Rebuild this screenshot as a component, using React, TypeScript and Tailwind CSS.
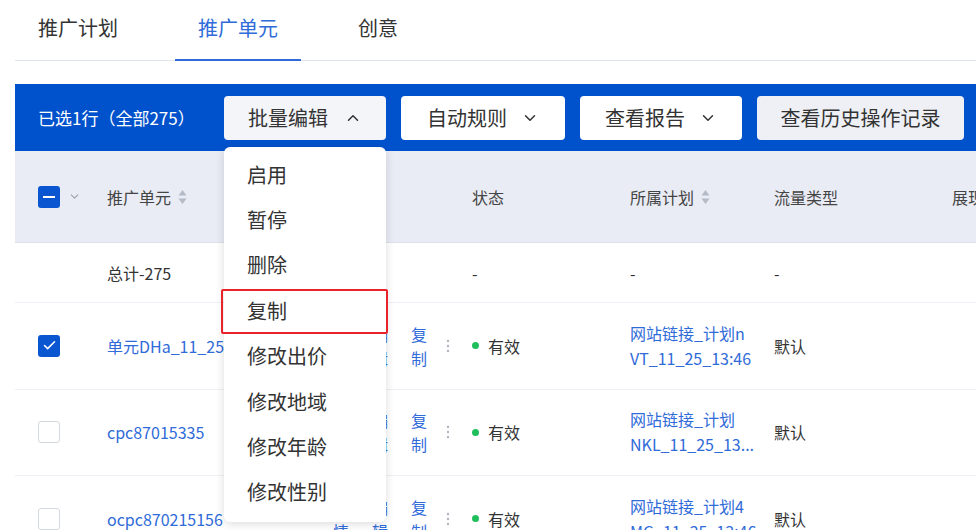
import { Check, ChevronDown, ChevronUp } from "lucide-react";

const FONT = { fontFamily: '"Noto Sans CJK SC", "Noto Sans", sans-serif' };

const menuItems = ["启用", "暂停", "删除", "复制", "修改出价", "修改地域", "修改年龄", "修改性别"];

const rows = [
  { name: "单元DHa_11_25_13:46", checked: true, plan: ["网站链接_计划n", "VT_11_25_13:46"] },
  { name: "cpc87015335", checked: false, plan: ["网站链接_计划", "NKL_11_25_13..."] },
  { name: "ocpc870215156", checked: false, plan: ["网站链接_计划4", "MG_11_25_13:46"] },
];

function SortIcon() {
  return (
    <svg width="9" height="16" viewBox="0 0 9 16" className="ml-[7px]">
      <path d="M4.5 1 L8.5 6.5 L0.5 6.5 Z" fill="#b4bac6" />
      <path d="M4.5 15 L8.5 9.5 L0.5 9.5 Z" fill="#b4bac6" />
    </svg>
  );
}

function Box({ checked }: { checked: boolean }) {
  if (checked) {
    return (
      <div className="w-[22px] h-[22px] rounded-[3px] bg-[#0a55d0] flex items-center justify-center">
        <Check className="w-[15px] h-[15px] text-white" strokeWidth={2.5} />
      </div>
    );
  }
  return <div className="w-[22px] h-[22px] rounded-[3px] bg-white border border-[#d4d8e0]" />;
}

function VLink({ text }: { text: string }) {
  return (
    <div className="flex flex-col w-[17px] text-[16px] leading-[24px] text-[#2f6bd9]">
      <span>{text[0]}</span>
      <span>{text[1]}</span>
    </div>
  );
}

function Dots() {
  return (
    <svg width="4" height="14" viewBox="0 0 4 14" className="ml-[18px]">
      <circle cx="2" cy="2" r="1.2" fill="#b0b5bf" />
      <circle cx="2" cy="7" r="1.2" fill="#b0b5bf" />
      <circle cx="2" cy="12" r="1.2" fill="#b0b5bf" />
    </svg>
  );
}

export default function App() {
  return (
    <div className="relative w-[976px] h-[530px] overflow-hidden bg-white text-[#333]" style={FONT}>
      {/* ── Tabs ── */}
      <div className="ml-[15px] flex h-[61px] gap-[34px] border-b border-[#dfe3ea]">
        <div className="px-[23px] pt-[12px] text-[20px] leading-[32px]">推广计划</div>
        <div className="px-[23px] pt-[12px] text-[20px] leading-[32px] text-[#2f6bd9] border-b-2 border-[#2f6bd9] -mb-px">
          推广单元
        </div>
        <div className="px-[23px] pt-[12px] text-[20px] leading-[32px]">创意</div>
      </div>

      {/* ── Selection bar ── */}
      <div className="ml-[15px] mt-[23px] h-[67px] bg-[#0052cc] flex items-center pl-[23px]">
        <div className="w-[186px] shrink-0 text-white text-[17px] whitespace-nowrap">已选1行（全部275）</div>
        <div className="flex gap-[15px] shrink-0">
          <button className="w-[162px] h-[44px] rounded-[4px] bg-[#f3f5f9] flex items-center justify-center gap-[16px] text-[20px]">
            批量编辑
            <ChevronUp className="w-[18px] h-[18px]" strokeWidth={2} />
          </button>
          <button className="w-[164px] h-[44px] rounded-[4px] bg-white flex items-center justify-center gap-[14px] text-[20px]">
            自动规则
            <ChevronDown className="w-[18px] h-[18px]" strokeWidth={2} />
          </button>
          <button className="w-[162px] h-[44px] rounded-[4px] bg-white flex items-center justify-center gap-[14px] text-[20px]">
            查看报告
            <ChevronDown className="w-[18px] h-[18px]" strokeWidth={2} />
          </button>
          <button className="w-[207px] h-[44px] rounded-[4px] bg-[#eef0f5] flex items-center justify-center text-[20px]">
            查看历史操作记录
          </button>
        </div>
      </div>

      {/* ── Table ── */}
      <div className="ml-[15px] text-[16px]">
        {/* header */}
        <div className="flex h-[92px] items-center bg-[#e9ecf4] border-b border-[#dde1e9] text-[#444]">
          <div className="w-[80px] shrink-0 pl-[23px] flex items-center">
            <div className="w-[22px] h-[22px] rounded-[3px] bg-[#0a55d0] flex items-center justify-center">
              <div className="w-[12px] h-[2px] bg-white" />
            </div>
            <ChevronDown className="ml-[8px] w-[13px] h-[13px] text-[#9aa1ad]" />
          </div>
          <div className="w-[226px] shrink-0 pl-[12px] flex items-center">
            推广单元
            <SortIcon />
          </div>
          <div className="w-[139px] shrink-0" />
          <div className="w-[158px] shrink-0 pl-[12px]">状态</div>
          <div className="w-[144px] shrink-0 pl-[12px] flex items-center">
            所属计划
            <SortIcon />
          </div>
          <div className="w-[178px] shrink-0 pl-[12px]">流量类型</div>
          <div className="shrink-0 pl-[12px] whitespace-nowrap">展现</div>
        </div>

        {/* total */}
        <div className="flex h-[60px] items-center border-b border-[#eef0f5]">
          <div className="w-[80px] shrink-0" />
          <div className="w-[226px] shrink-0 pl-[12px]">总计-275</div>
          <div className="w-[139px] shrink-0" />
          <div className="w-[158px] shrink-0 pl-[12px]">-</div>
          <div className="w-[144px] shrink-0 pl-[12px]">-</div>
          <div className="w-[178px] shrink-0 pl-[12px]">-</div>
        </div>

        {rows.map((r) => (
          <div key={r.name} className="flex h-[86.5px] items-center border-b border-[#eef0f5]">
            <div className="w-[80px] shrink-0 pl-[23px]">
              <Box checked={r.checked} />
            </div>
            <div className="w-[226px] shrink-0 pl-[12px] text-[#2f6bd9] whitespace-nowrap overflow-hidden">{r.name}</div>
            <div className="w-[139px] shrink-0 pl-[12px] flex items-center gap-[22px]">
              <VLink text="详情" />
              <VLink text="编辑" />
              <div className="flex items-center">
                <VLink text="复制" />
                <Dots />
              </div>
            </div>
            <div className="w-[158px] shrink-0 pl-[12px] flex items-center">
              <span className="w-[7px] h-[7px] rounded-full bg-[#1fbf5c] mr-[9px]" />
              有效
            </div>
            <div className="w-[144px] shrink-0 pl-[12px] text-[#2f6bd9] leading-[25px] whitespace-nowrap">
              <div>{r.plan[0]}</div>
              <div>{r.plan[1]}</div>
            </div>
            <div className="w-[178px] shrink-0 pl-[12px]">默认</div>
          </div>
        ))}
      </div>

      {/* ── Batch edit dropdown ── */}
      <div className="absolute left-[224px] top-[147px] w-[162px] h-[375px] bg-white rounded-[6px] shadow-[0_2px_10px_rgba(0,0,0,0.14)] pt-[5px]">
        {menuItems.map((m) => (
          <div key={m} className="relative h-[45.4px] flex items-center pl-[23px] text-[20px] text-[#333]">
            {m}
            {m === "复制" && (
              <div className="absolute -left-[3px] -right-[2px] top-[1px] bottom-[0px] border-2 border-[#e8232b] rounded-[2px]" />
            )}
          </div>
        ))}
      </div>
    </div>
  );
}
